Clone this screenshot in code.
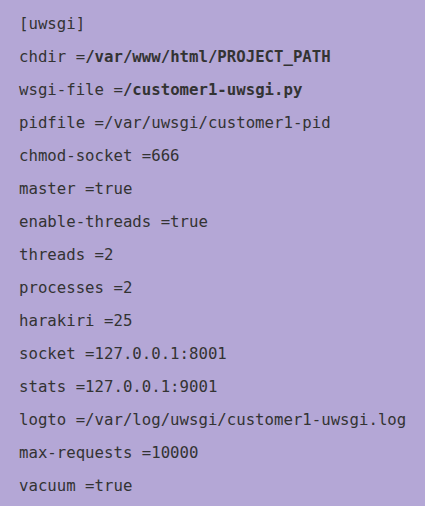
const LINES = [
  ['[uwsgi]'],
  ['chdir =', '/var/www/html/PROJECT_PATH'],
  ['wsgi-file =', '/customer1-uwsgi.py'],
  ['pidfile =/var/uwsgi/customer1-pid'],
  ['chmod-socket =666'],
  ['master =true'],
  ['enable-threads =true'],
  ['threads =2'],
  ['processes =2'],
  ['harakiri =25'],
  ['socket =127.0.0.1:8001'],
  ['stats =127.0.0.1:9001'],
  ['logto =/var/log/uwsgi/customer1-uwsgi.log'],
  ['max-requests =10000'],
  ['vacuum =true'],
]

export default function App() {
  return (
    <div className="w-[425px] h-[506px] overflow-hidden bg-[#b4a7d6] pt-[7px] pl-[19px] text-[#333333] text-[15.7px] leading-[33px] font-['DejaVu_Sans_Mono',monospace] whitespace-pre">
      {LINES.map(([plain, bold], i) => (
        <p key={i}>
          {plain}
          {bold && <strong className="font-bold">{bold}</strong>}
        </p>
      ))}
    </div>
  )
}
